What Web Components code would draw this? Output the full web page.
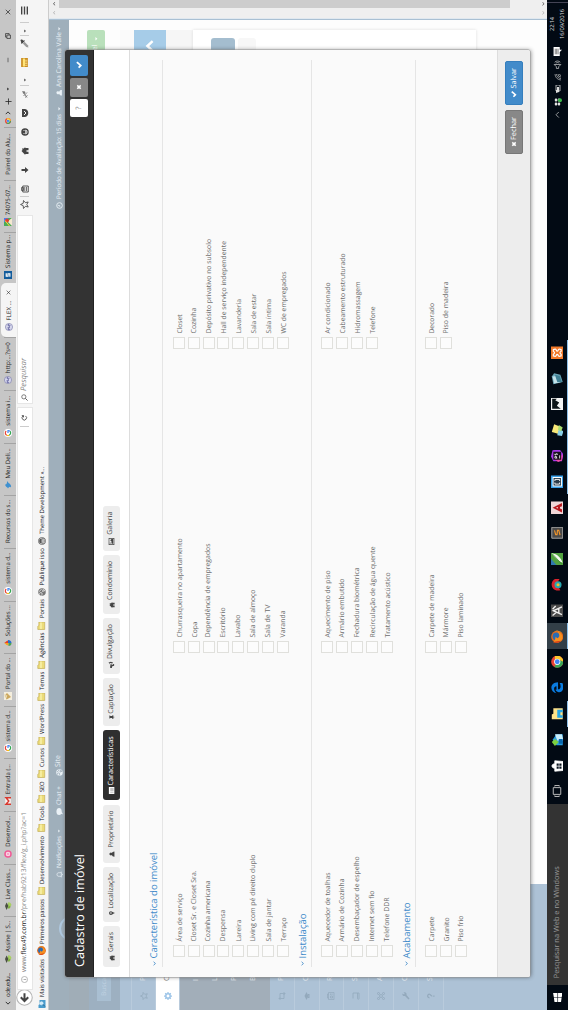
<!DOCTYPE html>
<html lang="pt-BR">
<head>
<meta charset="utf-8">
<title>Cadastro de imóvel</title>
<style>
html,body{margin:0;padding:0;width:568px;height:1010px;overflow:hidden;background:#fdfdfd}
body{font-family:"Open Sans","Noto Sans",sans-serif;text-rendering:geometricPrecision}
</style>
</head>
<body>
<turned-desktop></turned-desktop>
<script>
const ICONS = {
  check:'<path d="M1.5 8.5 4 6l3 3 5.500-6.500L15 5 7 14z" fill="currentColor"/>',
  times:'<path d="M2 5 5 2l3 3 3-3 3 3-3 3 3 3-3 3-3-3-3 3-3-3 3-3z" fill="currentColor"/>',
  chev:'<path d="M2.500 5 8 11l5.500-6" fill="none" stroke="currentColor" stroke-width="2.800"/>',
  up:'<path d="M2.500 11 8 5l5.500 6" fill="none" stroke="currentColor" stroke-width="2.800"/>',
  thinleft:'<path d="M11 2 5 8l6 6" fill="none" stroke="currentColor" stroke-width="2.400"/>',
  thinright:'<path d="m5 2 6 6-6 6" fill="none" stroke="currentColor" stroke-width="2.400"/>',
  thinup:'<path d="M1 12 8 5l7 7" fill="none" stroke="currentColor" stroke-width="1.800"/>',
  caret:'<path d="M2 5h12l-6 7z" fill="currentColor"/>',
  home:'<path d="M8 1 0 8.500h2V15h4.500v-4h3v4H14V8.500h2L13 5.500V2h-2v2z" fill="currentColor"/>',
  pin:'<path fill-rule="evenodd" d="M8 0a5 5 0 0 0-5 5c0 3 3 6 5 11 2-5 5-8 5-11a5 5 0 0 0-5-5zm0 3a2.200 2.200 0 1 1 0 4.400A2.200 2.200 0 0 1 8 3z" fill="currentColor"/>',
  user:'<path d="M8 1a3.700 4 0 0 1 2.500 7c2.500.5 4.500 2 4.500 6.500H1C1 10 3 8.500 5.500 8A3.700 4 0 0 1 8 1z" fill="currentColor"/>',
  list:'<path d="M0 2h16v12.500H0z" fill="currentColor"/><path d="M2 6.500h2m2 0h8M2 9h2m2 0h8m-12 2.500h2m2 0h8" stroke="#333" stroke-width=".8"/>',
  tack:'<path d="M4 1h8v2l-1.500.5v4L13 10v1.500H9L8 16l-1-4.500H3V10l2.500-2.500v-4L4 3z" fill="currentColor"/>',
  horn:'<path d="M0 5h5c4 0 6-2 8-4v3c2 .5 2 4.500 0 5v3c-2-2-3-3-6-3.500.5 2 .5 4 2 5.500H5L3.500 9H0z" fill="currentColor"/><path d="M6 6c2 0 4-.8 5.500-2v5C10 8 8 7.200 6 7z" fill="#eee"/>',
  image:'<path fill-rule="evenodd" d="M0 1.500h16v13H0zm1.500 1.500v10h13V3z" fill="currentColor"/><path d="M3 12V9l2-2 2 2 4-4 2.500 3v4z" fill="currentColor"/><circle cx="4.500" cy="5" r="1.300" fill="currentColor"/>',
  bell:'<path d="M2 12c2-2 2-4 2-6 0-5 8-5 8 0 0 2 0 4 2 6zM6 13c1 2.500 3 2.500 4 0" fill="none" stroke="currentColor" stroke-width="1.800"/>',
  chat:'<ellipse cx="8" cy="7" rx="8" ry="6" fill="currentColor"/><path d="m3 10-1 6 6-3.500z" fill="currentColor"/>',
  globe:'<circle cx="8" cy="8" r="7.500" fill="currentColor"/><path d="M3 3c4 0 5 2 3 5-3 1-4-1-5-1M9 2l2 3 3 2M9 9l4 1-2 4z" fill="none" stroke="var(--cut,#9caab6)" stroke-width="1.800"/>',
  clock:'<circle cx="8" cy="8" r="6.500" fill="none" stroke="currentColor" stroke-width="2"/><path d="M8 4v4.500H5" fill="none" stroke="currentColor" stroke-width="1.800"/>',
  star:'<path d="m8 1 2.100 4.700 5 .5-3.800 3.400 1.200 5L8 12.100 3.500 14.600l1.200-5L.9 6.200l5-.5z" fill="none" stroke="currentColor" stroke-width="1.500"/>',
  clip:'<path d="M2 3.500h12v11H2z" fill="none" stroke="currentColor" stroke-width="1.800"/><path d="M5 1h6v4H5zM4 7.500h8M4 11h8" stroke="currentColor" fill="none" stroke-width="1.500"/>',
  down:'<path d="M6 1h4v7h4l-6 7-6-7h4z" fill="currentColor"/>',
  smile:'<circle cx="8" cy="8" r="7.500" fill="currentColor"/><path d="M4 9.500c1 3.500 7 3.500 8 0zM5 5v2m6-2v2" stroke="#f5f5f5" fill="none" stroke-width="1.800"/>',
  pocket:'<path d="M0 2h16v5c0 10-16 10-16 0z" fill="currentColor"/><path d="m4 6 4 4 4-4" fill="none" stroke="#f5f5f5" stroke-width="2"/>',
  glasses:'<path d="M1 12 14 3M4 5l7 7M1 8l4 5" stroke="currentColor" stroke-width="1.800" fill="none"/><circle cx="11" cy="6" r="2.600" fill="currentColor"/>',
  ruler:'<path d="M0 2h16v12H0z" fill="#c88c22"/><path d="M1 5h14v4H1z" fill="#ffe478"/><path d="M3 9v4m3-4v4m3-4v4m3-4v4" stroke="#fbe08a" stroke-width="1.500"/>',
  drop:'<path d="m1 15 1-4 6-6 3 3-6 6z" fill="#999"/><path d="m7 3 6 6 1-2-1-1c4-3 1-7-2-4L9 2z" fill="#444"/>',
  menu:'<path d="M1 3h14M1 8h14M1 13h14" stroke="currentColor" stroke-width="2.400"/>',
  back:'<circle cx="8" cy="8" r="7.300" fill="#fff" stroke="#b5b5b5" stroke-width="1"/><path d="M12 8H5m3.300-3.500L4.700 8l3.600 3.500" fill="none" stroke="#444" stroke-width="1.900"/>',
  info:'<circle cx="8" cy="8" r="7" fill="none" stroke="currentColor" stroke-width="1.300"/><path d="M8 7v5M8 4v1.600" stroke="currentColor" stroke-width="1.600"/>',
  reload:'<path d="M12.500 11A5.500 5.500 0 1 1 12 4.500" fill="none" stroke="currentColor" stroke-width="2"/><path d="M14 1v6H8z" fill="currentColor"/>',
  search:'<circle cx="9.500" cy="6.500" r="4.800" fill="none" stroke="currentColor" stroke-width="1.700"/><path d="m6 10-5 5" stroke="currentColor" stroke-width="2.200"/>',
  folder:'<path d="M1 1.500h6l1.500 2H15v11H1z" fill="#ecdc7a" stroke="#c0a850" stroke-width="1.200"/><path d="M2 6h12v3H2z" fill="#f8f0a8"/>',
  most:'<path d="M0 1h6l1 2h9v12H0z" fill="#4a9ccc"/><circle cx="9.500" cy="7" r="3.200" fill="#cdeafa" stroke="#fff"/><path d="m7 10-4 4" stroke="#26648e" stroke-width="2"/>',
  firefox:'<circle cx="8" cy="8" r="7.800" fill="#e66a18"/><circle cx="8.500" cy="7" r="5" fill="#2a6cb4"/><path d="M1 3c1 1 2 1 3 2l4 1-2 2c1 3 5 4 8 0 0 8-12 9-13.500 1z" fill="#f69020"/><path d="M14 3c2 3 2 9-2 11 4-1 5-7 2-11z" fill="#ffcf38"/><path d="M1 2.500C0 6 0 10 3 13L2 6z" fill="#d83a18"/>',
  wp:'<circle cx="8" cy="8" r="7.500" fill="#555"/><circle cx="8" cy="8" r="6.200" fill="none" stroke="#eee" stroke-width=".8"/><path d="m3 5 3 8 2-6 2 6 3-8" fill="none" stroke="#eee" stroke-width="1.500"/>',
  leaf:'<path d="M0 5 8 2l7 3-7 4z" fill="#4a4f42"/><path d="M3 7v4c2 3 7 3 10-1V7L8 9z" fill="#80b040"/><path d="M8 11c3-4 6-3 8-2-1 5-5 7-8 5z" fill="#a8d060"/>',
  pink:'<circle cx="8" cy="8" r="7.500" fill="#f05a96"/><circle cx="8" cy="8" r="4.500" fill="#fde3ed"/><path d="M5 8h6M8 5v6" stroke="#e85a90"/>',
  gmail:'<path d="M0 2.500h16v11H0z" fill="#f8f0ee"/><path d="M1.500 14V4L8 9.500 14.500 4v10" fill="none" stroke="#d8382e" stroke-width="3"/>',
  google:'<circle cx="8" cy="8" r="8" fill="#fff"/><g fill="none" stroke-width="2.400"><path d="M12 4.500A5 5 0 0 0 3.500 5.800" stroke="#e84436"/><path d="M3.500 5.800a5 5 0 0 0 0 4.500" stroke="#f8bc16"/><path d="M3.500 10.300A5 5 0 0 0 11.500 12" stroke="#34a853"/><path d="M11.500 12A5 5 0 0 0 13 8H8" stroke="#4285f4"/></g>',
  portal:'<path d="M0 0h16v16H0z" fill="#f4eede"/><path d="M1 5c4-3 6 5 10-2l3 3-8 8z" fill="#cba75e"/><path d="M4 2l5 5 3-6z" fill="#e2cfa0"/>',
  flame:'<path d="M8 0c1 3 5 5 5 9H8z" fill="#e83c2c"/><path d="M8 0v9H3c0-4 3-5 5-9z" fill="#f8a020"/><path d="M2 9h6v6C4 15 2 13 2 9z" fill="#4aa456"/><path d="M8 8h6c0 5-3 7-6 7z" fill="#2870d0"/>',
  bird:'<path d="M1 8c3-1 3-5 8-6 0 3 1 3 4 4l3 1-4 2c-2 4-5 6-9 5 3-2 1-4-2-6z" fill="#3e90d0"/>',
  php:'<circle cx="8" cy="8" r="7.200" fill="#d5d6ec" stroke="#7878a8" stroke-width="1.200"/><path d="M3 10V6h2v2H3m4-3v5m0-2h2v2m2 1V6h2v2h-2" stroke="#5a5a9a" fill="none" stroke-width="1.200"/>',
  sq:'<path d="M0 0h16v16H0z" fill="#125c9c"/><path d="M11.500 4.500h-6v3.500h5v3.700h-6" fill="none" stroke="#fff" stroke-width="2.400"/>',
  map:'<path d="M0 0h16v16H0z" fill="#4aab58"/><path d="M0 16 9 7l7 9z" fill="#f4e8d0"/><path d="M7 0h9v9z" fill="#4a7ef0"/><circle cx="11" cy="6" r="4" fill="#e23c30"/><path d="m0 11 11-9" stroke="#ffd33c" stroke-width="2"/>',
  chrome:'<circle cx="8" cy="8" r="7.800" fill="#e94435"/><path d="M8 8 1.200 4.200A7.800 7.800 0 0 0 8 15.800l3-5.500z" fill="#3aa757"/><path d="M8 5h7.200A7.800 7.800 0 0 1 8 15.800l3-6z" fill="#fcc62d"/><circle cx="8" cy="8" r="4" fill="#fff"/><circle cx="8" cy="8" r="3.100" fill="#4285f4"/>',
  minus:'<path d="M2 8h12" stroke="currentColor" stroke-width="1.500"/>',
  restore:'<path d="M1.500 5h9v9.500h-9zM5 5V1.500h9.500V11h-4" fill="none" stroke="currentColor" stroke-width="1.800"/>',
  x:'<path d="m2 2 12 12M14 2 2 14" stroke="currentColor" stroke-width="1.800"/>',
  plus:'<path d="M8 1v14M1 8h14" stroke="currentColor" stroke-width="1.800"/>',
  gear:'<circle cx="8" cy="8" r="4.400" fill="none" stroke="currentColor" stroke-width="3"/><path d="M8 0v3m0 10v3M0 8h3m10 0h3M2.400 2.400l2 2m7.200 7.200 2 2m0-11.200-2 2m-7.200 7.200-2 2" stroke="currentColor" stroke-width="2.500"/>',
  retweet:'<path d="M3 2v10h9M0 5l3-3 3 3m-1-1h8v10m-3-3 3 3 3-3" fill="none" stroke="currentColor" stroke-width="1.600"/>',
  grad:'<path d="m0 7 8-4 8 4-8 4zM4 10v3h8v-3" fill="currentColor"/>',
  doc:'<path d="M1 3h14v11H1zM4 3V1h8v2M4 7h4v4H4zM10 7h3m-3 3h3" fill="none" stroke="currentColor" stroke-width="1.400"/>',
  book:'<path d="M3 2h11v12H3c-2 0-2-3 0-3h11" fill="none" stroke="currentColor" stroke-width="1.600"/>',
  nodes:'<g fill="none" stroke="currentColor" stroke-width="1.600"><circle cx="8" cy="8" r="3"/><circle cx="3" cy="3" r="2"/><circle cx="13" cy="3" r="2"/><circle cx="3" cy="13" r="2"/><circle cx="13" cy="13" r="2"/></g>',
  wrench:'<path d="m1 13 7-7c-1-4 2-6 5-5l-2 3 1.500 1.500L15 3c2 4-1 7-5 6l-7 6z" fill="currentColor"/>',
  ask:'<path d="M4.500 5c0-5 7.500-4.500 7 0-.3 2.300-3.500 2.500-3.500 5.500m0 2V15" fill="none" stroke="currentColor" stroke-width="2.500"/>',
  win:'<path d="m0 2.500 7-1v6H0zM8 1.400 16 0v7.500H8zM0 8.500h7v6l-7-1zM8 8.500h8V16l-8-1.300z" fill="#fff"/>',
  tview:'<path d="M3.500 3h9v10h-9zM2 5H.7v6H2m12-6h1.300v6H14" fill="none" stroke="#bbb" stroke-width="1.300"/>',
  store:'<path d="M1 5h14l-1 11H2zM5 5c0-5 6-5 6 0" fill="#fff" stroke="#fff"/><path d="M4.500 7.500h3v2.800h-3zm4 0h3v2.800h-3zm-4 3.600h3V14h-3zm4 0h3V14h-3z" fill="#08131f"/>',
  cube3:'<path d="M1 7 8 2l7 5v8H1z" fill="#2a9be0"/><path d="M0 5 5 1l4 4-4 5z" fill="#7cd040"/><path d="m7 8 8-3v9l-8 2z" fill="#c8edfa"/><path d="M3 10h6v5H3z" fill="#0868b0"/>',
  explorer:'<path d="M1 1h6l1 2h7v12H1z" fill="#ffe38a"/><path d="M3 8h10v7h-3v-3H6v3H3z" fill="#28a8e8"/>',
  edge:'<path d="M1 7c1-9 14-9 14 2H6c0 4 5 4 8 2v3.500C7 18 1 14 2.500 9 3 7 5 5.500 6 5.500 5 6 5.500 6.800 5.500 7H10c0-4-6-4-9 0z" fill="#0a7be0"/>',
  ai:'<path d="M0 0h16v16H0z" fill="#4b4b4b"/><path d="m3 14 5-11 5 11M5 10h7M2 2l4 5M10 2l4 4" fill="none" stroke="#eee" stroke-width="1.800"/>',
  redball:'<path d="M1 12C-1 4 5 0 10 1c5 1 7 6 5 10l-5-4z" fill="#d9232c"/><circle cx="8" cy="9" r="4.500" fill="#27a7b0"/><circle cx="8" cy="9" r="2" fill="#f0c030"/>',
  green:'<path d="M0 0h16v16H0z" fill="#52a340"/><path d="M3 15C5 9 9 5 15 1c-1 7-5 11-12 14z" fill="#f4faf0"/><path d="m0 7 8-7H0z" fill="#2f7ab0"/><path d="m1 14 13-12" stroke="#3c8a30"/>',
  subl:'<path d="M1 1h14v14H1z" fill="#4a4a4a" stroke="#aaa" stroke-width="1.200"/><path d="M11 4.500 5.500 6v1.700l5.500.6V10l-6 1.500" fill="none" stroke="#f0952c" stroke-width="1.500"/>',
  acad:'<path d="M0 0h16v16H0z" fill="#efd6d8"/><path fill-rule="evenodd" d="M8 2 2 14h4l1-2.500h2l1 2.500h4zM8 6l1 3H7z" fill="#b8181e"/>',
  brack:'<path d="M0 0h16v16H0z" fill="#3aa0e8"/><path d="M2 2h12v12H2z" fill="#fff"/><path d="M3.300 3.300h9.400v9.400H3.300z" fill="#2a3a48"/><path d="M7 5H5v6h2m2-6h2v6H9" fill="none" stroke="#fff" stroke-width="1.200"/>',
  phps:'<path d="m1 3 6-3 8 2 1 9-6 5-9-2z" fill="#a838e8"/><path d="m0 9 5-6 4 12-7-1z" fill="#f04aa8"/><path d="M3 3h10v10H3z" fill="#15101c"/><path d="M5 8V5h2v2H5m5.500-2H9v1.300h1.500V8H9M4.500 11h4" stroke="#fff" fill="none"/>',
  notes:'<path d="m5 1 10 3-3 8-9-3z" fill="#f8e878"/><path d="m1 8 8 2-3 6-6-2z" fill="#8ad0e8"/><path d="m8 9 6 1-3 5-5-2z" fill="#a8dc70"/>',
  mount:'<path d="M0 0h16v16H0z" fill="#f4f4f4"/><path d="M1.500 1.500h13v6l-2-2-3 5-4-3-4 5z" fill="#0c1418"/>',
  glass:'<path d="m1 3 10-2 4 3-2 8-9 3z" fill="#6aa6b8"/><path d="m2 4 9-2 1 8-8 3z" fill="#c4e2ea"/><path d="m4 8 9-3-1 6-8 3z" fill="#3f7f94"/>',
  xampp:'<path d="M0 0h16v16H0z" fill="#f27a2a"/><path d="M4 3c-2 5 2 3 2 5s-4 0-2 5h2c1-2 3-2 4 0h2c2-5-2-3-2-5s4 0 2-5h-2C9 5 7 5 6 3z" fill="none" stroke="#fff" stroke-width="1.500"/>',
  dbox:'<path d="m4 1 4 3-4 3-4-3zm8 0 4 3-4 3-4-3zM4 7l4 3-4 3-4-3zm8 0 4 3-4 3-4-3z" fill="#eee"/><circle cx="11.500" cy="12" r="4" fill="#3ab84a"/>',
  batt:'<path d="M4 4h12v8H4z" fill="none" stroke="#ddd" stroke-width="1.500"/><path d="M6 6h6v4H6zM0 4h6v6H2z" fill="#ddd"/>',
  wifi:'<path d="M2 14A12 12 0 0 1 14 2M5 14a9 9 0 0 1 9-9M8 14a6 6 0 0 1 6-6M11 14a3 3 0 0 1 3-3" fill="none" stroke="#bbb" stroke-width="1.400"/>',
  vol:'<path d="M1 6h3l4-4v12l-4-4H1z" fill="none" stroke="#ccc" stroke-width="1.300"/><path d="M10 5c2 2 2 4 0 6m2-8c3 3 3 7 0 10" fill="none" stroke="#ccc" stroke-width="1.300"/>',
  notif:'<path d="M0 1h16v11h-5v4l-4-4H0z" fill="#fff"/><path d="M3 4h10M3 6.500h10M3 9h10" stroke="#222" stroke-width="1"/>'
};

class XIcon extends HTMLElement {
  connectedCallback() {
    const s = this.getAttribute('s') || 7;
    const r = this.shadowRoot || this.attachShadow({mode:'open'});
    r.innerHTML = `<style>:host{display:block;flex:none;width:${s}px;height:${s}px}svg{display:block;width:100%;height:100%}</style>
      <svg viewBox="0 0 16 16">${ICONS[this.getAttribute('n')] || ''}</svg>`;
  }
}
/* Single-line label that sizes its letters to fill the width given in "w". */
class XLabel extends HTMLElement {
  connectedCallback() {
    const w = +this.getAttribute('w');
    const r = this.shadowRoot || this.attachShadow({mode:'open'});
    r.innerHTML = `<style>:host{display:block;flex:none;width:${w}px;white-space:nowrap}span{display:inline-block;white-space:pre;vertical-align:middle}</style><span><slot></slot></span>`;
    const span = r.querySelector('span'), n = this.textContent.length;
    const width = () => parseFloat(getComputedStyle(span).width);
    const nat = width(), fs = parseFloat(getComputedStyle(this).fontSize);
    if (!n || !nat) return;
    span.style.fontSize = (fs * Math.min(1.1, Math.max(.92, w / nat))).toFixed(3) + 'px';
    span.style.letterSpacing = ((w - width()) / n).toFixed(3) + 'px';
  }
}
/* Lays [start, width, html] entries along one row using margins between neighbours. */
const run = (items, from = 0) => {
  let end = from;
  return items.map(([u, w, html]) => {
    const m = u - end; end = u + w;
    return `<div class="c" style="margin-left:${m.toFixed(2)}px;width:${w}px">${html}</div>`;
  }).join('');
};
const ic = (u, n, s = 7, color = '') => [u - s / 2, s, `<x-icon n="${n}" s="${s}"${color ? ` style="color:${color}"` : ''}></x-icon>`];
const tx = (a, b, t) => [a, b - a, `<x-label w="${b - a}">${t}</x-label>`];
const ROW = '.c{flex:none}*{box-sizing:border-box}';
const define = (name, html) => customElements.define(name, class extends HTMLElement {
  connectedCallback() {
    if (this.shadowRoot) return;
    this.attachShadow({mode:'open'}).innerHTML = typeof html === 'function' ? html(this) : html;
  }
});
customElements.define('x-icon', XIcon);
customElements.define('x-label', XLabel);

define('browser-tab', el => {
  const i = el.getAttribute('icon'), on = el.hasAttribute('on');
  return `<style>:host{display:flex;flex:none;align-items:center;width:52.63px;height:15px;padding-left:${i ? 6 : 5}px;gap:3px;box-sizing:border-box;
    ${on ? 'background:#f5f5f5;border-radius:5px 5px 0 0;margin-top:1px;width:54.63px;margin-right:-2px' : 'background:linear-gradient(#a4a4a4,#a4a4a4) right 3px/1px 12px no-repeat'}}
    .x{margin-left:2px}</style>${i ? `<x-icon n="${i}" s="8"></x-icon>` : ''}<slot></slot>${on ? '<x-icon class="x" n="x" s="5"></x-icon>' : ''}`;
});
const TABS = [['leaf','Assine | S...',31],['leaf','Live Class...',31],['pink','Desenvol...',31],['gmail','Entrada (...',30],['google','sistema d...',31],['portal','Portal do ...',31],['flame','Soluções ...',31],['google','sistema d...',31],['','Recursos do s...',43],['bird','Meu Deli...',30],['google','sistema i...',30],['php','http:...?s=0',31],['php','FLEX ...',20,1],['sq','Sistema p...',33],['map','74075-07...',30],['','Painel do Alu...',41]];
define('tab-strip', `<style>${ROW}:host{display:flex;height:16px;align-items:center;background:#c6c6c6;font-size:6.6px;line-height:12px;color:#222}
  .w{display:flex;align-items:center}</style>
  <div class="w">${run([ic(7,'thinleft',6), tx(13,37,'ode.edu...')])}</div><div style="width:4px"></div>
  ${TABS.map(t => `<browser-tab icon="${t[0]}" ${t[3] ? 'on' : ''}><x-label w="${t[2]}">${t[1]}</x-label></browser-tab>`).join('')}
  <div class="w">${run([ic(889.5,'chrome',6), ic(897,'thinright',6), ic(909,'plus',7), ic(921,'caret',4), ic(950,'minus',6), ic(974,'restore',6), ic(998,'x',6)],883.08)}</div>`);

define('nav-bar', `<style>${ROW}:host{display:flex;align-items:center;height:17px;background:#f5f5f5;color:#444;font-size:7px;line-height:12px}
  .f{display:flex;align-items:center;background:#fff;height:14px;outline:1px solid #e6e6e6;outline-offset:-.5px}
  .s{width:1px;height:9px;background:#ccc} b{font-weight:400;color:#222}</style>
  ${run([ic(12,'back',17)])}
  <div class="f" style="width:581px">${run([ic(30,'info',7,'#888'), [38,160,'<x-label w="160" style="color:#888">www.<b>flex49.com.br</b>/pre/hab9213/flex/g_i.php?ac=1</x-label>'], [583,1,'<div class="s"></div>'], ic(592,'reload',6.5)],20.5)}</div>
  <div class="f" style="width:187px;margin-left:5px;font-style:italic;color:#888">${run([ic(612.500,'search',7,'#555'), tx(619,652,'Pesquisar')],606.5)}</div>
  ${run([ic(805,'star',9),[812.5,1,'<div class="s"></div>'],ic(821,'clip',8),ic(840,'down',8),ic(859,'home',8),ic(878,'smile',8),ic(897,'pocket',8),ic(916,'glasses',8,'#777'),[923.5,1,'<div class="s"></div>'],ic(930,'caret',4),ic(947,'ruler',9),ic(966,'drop',9),[973.5,1,'<div class="s"></div>'],ic(979,'caret',4),[987,1,'<div class="s"></div>'],ic(999,'menu',9)],793.5)}`);

define('bookmark-bar', () => {
  const f = u => ic(u,'folder',8.5);
  return `<style>${ROW}:host{display:flex;align-items:center;height:16px;padding-top:2px;box-sizing:border-box;background:#f5f5f5;border-bottom:1px solid #ccc;font-size:6.4px;line-height:12px;color:#111122;--cut:#ddd}</style>
  ${run([ic(6,'most',8),tx(13,51,'Mais visitados'),ic(59,'firefox',9),tx(66,111,'Primeiros passos'),f(119),tx(126,174,'Desenvolvimento'),f(182),tx(189,204,'Tools'),f(211),tx(218,228.5,'SEO'),f(236),tx(243,262,'Cursos'),f(269),tx(276,306,'WordPress'),f(313),tx(320,338.5,'Temas'),f(345),tx(352,377.5,'Agências'),f(384),tx(392,411,'Portais'),ic(418,'globe',8,'#777'),tx(424.5,462,'Publique isso'),ic(469,'wp',8),tx(476,543,'Theme Development »...')])}`;
});

define('app-header', `<style>${ROW}:host{display:flex;height:20px;align-items:center;background:#9fafbb;color:#eaf1f6;font-size:6.6px;line-height:12px;width:990px}</style>
  ${run([ic(135,'bell',7),tx(142,174,'Notificações'),ic(179,'caret',4),ic(198,'chat',7),tx(205,224,'Chat +'),ic(237,'globe',7),tx(243,255,'Site'),ic(804,'clock',7),tx(811,896,'Período de Avaliação: 15 dias'),ic(901,'caret',4.5),ic(917,'user',6.5),tx(923,978,'Ana Carolina Valle'),ic(981,'caret',4.5)])}`);

define('side-item', el => `<style>:host{display:flex;flex:none;align-items:center;box-sizing:border-box;height:24.8px;padding-left:10px;gap:11px;background:#adc2d6;border-bottom:1px solid #b9cbdc;color:#93a9bc;font-size:7px;line-height:10px}
  :host([on]){background:#fff;color:#9cc4e8;height:24px}:host([sub]){background:#a2aeb9;border:0;height:19px;padding-left:29px}</style>
  ${el.hasAttribute('sub') ? '' : `<x-icon n="${el.getAttribute('icon')}" s="8"></x-icon>`}<span style="color:${el.hasAttribute('on') ? '#777' : '#eef3f7'}"><slot></slot></span>`);
define('side-menu', `<style>:host{display:flex;flex-direction:column;width:126px;height:478px;background:#adc2d6}
  .q{height:31px;flex:none;background:#9db0c1;padding:8px 0 0 9px;box-sizing:border-box}
  .b{width:41px;height:14px;background:#a9bfd2;color:#c0d2e1;font-size:6.6px;line-height:14px;padding-left:5px;box-sizing:border-box}
  .t{height:20px;flex:none;background:#a0adb7}.g{height:12px;flex:none;border-bottom:1px solid #b9cbdc;box-sizing:border-box}
  .s{background:#a2aeb9;height:90px;flex:none;padding-top:7px;box-sizing:border-box}</style>
  <div class="t"></div><div class="q"><div class="b">Buscar</div></div><div class="g"></div>
  <side-item icon="star" style="height:24px">P</side-item><side-item icon="gear" on>C</side-item>
  <div class="s"><side-item sub>I</side-item><side-item sub>L</side-item><side-item sub>P</side-item><side-item sub>B</side-item></div>
  <side-item icon="retweet">P</side-item><side-item icon="grad">C</side-item><side-item icon="doc">R</side-item><side-item icon="book">S</side-item><side-item icon="nodes">A</side-item><side-item icon="wrench">C</side-item><side-item icon="ask">S</side-item>`);

define('page-content', `<style>:host{display:flex;flex-direction:column;align-items:flex-end;width:864px;height:478px;background:#fdfdfd;box-sizing:border-box;padding:18px 10px 0 0}
  .g{width:60px;height:18px;flex:none;background:#b9e0bb;border-radius:2px;color:#fff;font-size:7px;line-height:18px;box-sizing:border-box;display:flex;align-items:center;justify-content:flex-end;padding-right:7px;gap:3px}
  .p{margin-top:15px;height:14px;width:700px;background:#fafafa;flex:none}.b{height:32px;width:55px;background:#a6cce8;color:#fff;flex:none;display:flex;align-items:center;justify-content:flex-end;padding-right:9px;box-sizing:border-box}
  .h{height:27px;width:700px;background:#f6f6f6;flex:none}
  .card{height:283px;width:800px;background:#fff;box-shadow:0 0 3px #ddd;flex:none;display:flex;flex-direction:column;align-items:flex-end;padding:18px 8px 0 0;box-sizing:border-box;gap:3px}
  .k{height:24px;width:60px;background:#a4bdcf;border-radius:3px}.l{height:18px;width:60px;background:#f7f7f7;border-radius:3px}</style>
  <div class="g"><span>Imóvel</span><x-icon n="caret" s="4.500"></x-icon></div><div class="p"></div>
  <div class="b"><x-icon n="up" s="14"></x-icon></div><div class="h"></div>
  <div class="card"><div class="k"></div><div class="l"></div></div>`);

define('scroll-rail', `<style>:host{display:flex;flex-direction:column;align-items:center;justify-content:space-between;box-sizing:border-box;padding:3px 0 2px;width:10px;height:498px;background:#efefef;color:#aaa}
  :host([thumb]){width:8px;color:#444}.t{width:8px;height:451px;background:#cdcdcd;margin-bottom:28px;display:none}:host([thumb]) .t{display:block}</style>
  <x-icon n="up" s="4.500"></x-icon><div class="t"></div><x-icon n="chev" s="4.500"></x-icon>`);

define('round-ring', `<style>:host{position:absolute;left:69px;top:59px;width:25px;height:25px;box-sizing:border-box;border:2px solid #afc8df;border-radius:50%}</style>`);

define('tab-pill', el => `<style>:host{display:flex;flex:none;box-sizing:border-box;align-items:center;justify-content:space-between;width:${el.getAttribute('w')}px;height:17px;padding:0 6px;border-radius:3px;background:#ededed;color:#444;font-size:6.9px;line-height:16px}
  :host([on]){background:#2f2f2f;color:#fff}</style><x-icon n="${el.getAttribute('icon')}" s="${el.getAttribute('s') || 7}"></x-icon><slot></slot>`);

define('check-item', `<style>:host{display:flex;align-items:center;height:14.85px;gap:3.500px;font-size:6.8px;line-height:12px;color:#6c6c6c}
  i{flex:none;width:12px;height:12px;box-sizing:border-box;border:1px solid #e0e0dc;background:#fcfcfc}slot{display:block}.t{padding-top:1.500px}</style><i></i><div class="t"><slot></slot></div>`);

define('feature-section', el => `<style>:host{display:block}
  header{display:flex;align-items:center;box-sizing:border-box;height:17px;border-bottom:1px solid #e5e5e5;color:#428bca;font-size:9.400px;line-height:12px;gap:3px;margin-bottom:8.400px;padding:0 0 0 .5px}
  .g{display:grid;grid-template-columns:304px 304px 1fr;padding-left:10px}</style>
  <header><x-icon n="chev" s="5"></x-icon><x-label w="${el.getAttribute('w')}">${el.getAttribute('heading')}</x-label></header><div class="g"><slot></slot></div>`);

const col = list => `<div>${list.map(([t, w]) => `<check-item><x-label w="${w}">${t}</x-label></check-item>`).join('')}</div>`;
const S1 = [[['Área de serviço',48],['Closet Sr. e Closet Sra.',71],['Cozinha americana',61],['Despensa',32],['Lareira',22],['Living com pé direito duplo',87],['Sala de jantar',43],['Terraço',24]],
 [['Churrasqueira no apartamento',99],['Copa',16],['Dependência de empregados',94],['Escritório',30],['Lavabo',23],['Sala de almoço',48],['Sala de TV',33],['Varanda',27]],
 [['Closet',19],['Cozinha',26],['Depósito privativo no subsolo',94.5],['Hall de serviço independente',92.5],['Lavanderia',34.5],['Sala de estar',40],['Sala íntima',34.5],['WC de empregados',62]]];
const S2 = [[['Aquecedor de toalhas',69],['Armário de Cozinha',63],['Desembaçador de espelho',85],['Internet sem fio',51],['Telefone DDR',44]],
 [['Aquecimento de piso',67],['Armário embutido',59],['Fechadura biométrica',70],['Recirculação de água quente',91],['Tratamento acústico',65]],
 [['Ar condicionado',51],['Cabeamento estruturado',80],['Hidromassagem',52],['Telefone',27]]];
const S3 = [[['Carpete',25],['Granito',24],['Piso frio',26]],[['Carpete de madeira',63],['Mármore',30],['Piso laminado',45]],[['Decorado',30.5],['Piso de madeira',52]]];

define('property-dialog', `<style>*{box-sizing:border-box}
  :host{position:absolute;left:33px;top:65px;width:927px;height:465px;display:flex;flex-direction:column;background:#fafafa;border-radius:2px;box-shadow:0 0 0 .5px #999,0 1px 4px rgba(0,0,0,.45);overflow:hidden}
  .h{display:flex;align-items:center;height:28.500px;flex:none;background:#333;color:#fff;font-size:13.300px;line-height:20px;padding:0 5px 0 10px;gap:2px;border-bottom:.5px solid #222}
  .sp{flex:1}.k{height:18px;border-radius:2px;display:flex;align-items:center;justify-content:center;font-size:7.500px;line-height:12px}
  .n{display:flex;gap:4.200px;height:36px;flex:none;background:#fff;border-bottom:1px solid #ddd;padding:9.500px 0 0 10px}
  .m{flex:1;padding:16.500px 10px 0;display:flex;flex-direction:column}
  .f{height:33px;flex:none;background:#ededed;border-top:1px solid #ddd;display:flex;align-items:center;justify-content:flex-end;gap:5px;padding-right:11px}
  .b{width:44px;height:18px;border-radius:2px;display:flex;align-items:center;justify-content:space-between;padding:0 6px 0 6px;color:#fff;font-size:7px;line-height:16px;background:#888;border:.5px solid #777}
  .p{background:#428bca;border-color:#357ebd}</style>
  <div class="h"><x-label w="113" style="padding-top:1px">Cadastro de imóvel</x-label><div class="sp"></div>
    <div class="k" style="width:18px;background:#fff;color:#888">?</div><div class="k" style="width:19px;background:#888"><x-icon n="times" s="6"></x-icon></div><div class="k" style="width:21px;background:#428bca"><x-icon n="check" s="8"></x-icon></div></div>
  <div class="n">
    <tab-pill w="41" icon="home" s="6"><x-label w="20">Gerais</x-label></tab-pill>
    <tab-pill w="55" icon="pin" s="6"><x-label w="36">Localização</x-label></tab-pill>
    <tab-pill w="58" icon="user" s="6"><x-label w="37">Proprietário</x-label></tab-pill>
    <tab-pill w="70" icon="list" on><x-label w="49">Características</x-label></tab-pill>
    <tab-pill w="48" icon="tack" s="6"><x-label w="29.5">Captação</x-label></tab-pill>
    <tab-pill w="56" icon="horn"><x-label w="35">Divulgação</x-label></tab-pill>
    <tab-pill w="59" icon="home" s="6"><x-label w="39">Condomínio</x-label></tab-pill>
    <tab-pill w="45" icon="image"><x-label w="23">Galeria</x-label></tab-pill>
  </div>
  <div class="m">
    <feature-section heading="Característica do imóvel" w="106" style="height:148.600px">${S1.map(col).join('')}</feature-section>
    <feature-section heading="Instalação" w="45" style="height:104px">${S2.map(col).join('')}</feature-section>
    <feature-section heading="Acabamento" w="56">${S3.map(col).join('')}</feature-section>
  </div>
  <div class="f"><div class="b"><x-icon n="times" s="6"></x-icon><x-label w="23">Fechar</x-label></div><div class="b p"><x-icon n="check" s="7.500"></x-icon><x-label w="20.5">Salvar</x-label></div></div>`);

const APPS = ['cube3','explorer*','edge','chrome','firefox*','ai','redball','green','subl','acad','brack*','phps*','notes*','mount*','glass*','xampp*'];
define('task-bar', `<style>${ROW}:host{display:flex;align-items:center;height:21px;background:#020a14;color:#ddd;font-size:7px;line-height:10px}
  .s{width:181px;height:21px;background:#333;color:#999;padding-left:7px;display:flex;align-items:center;margin-left:7.500px;margin-right:7px}
  .a{width:25.8px;height:21px;flex:none;display:flex;align-items:center;justify-content:center;border-bottom:1px solid transparent}
  .r{border-color:#8fc0e8}.o{background:#333f48}.k{text-align:center;font-size:6.200px;line-height:9.500px;display:flex;flex-direction:column;align-items:center}
  .e{width:1px;height:21px;background:#445}</style>
  ${run([ic(12.500,'win',9.500)])}<div class="s"><x-label w="112">Pesquisar na Web e no Windows</x-label></div>
  <div class="a" style="width:12px"><x-icon n="tview" s="12"></x-icon></div><div class="a" style="margin-left:6px;margin-right:1px"><x-icon n="store" s="12"></x-icon></div>
  ${APPS.map(a => { const n = a.replace('*',''); return `<div class="a${a !== n ? ' r' : ''}${n === 'firefox' ? ' o' : ''}"><x-icon n="${n}" s="12.5"></x-icon></div>`; }).join('')}
  ${run([ic(896,'thinup',6.5,'#ccc'),ic(909,'dbox',8),ic(922,'batt',8),ic(934.500,'wifi',8),ic(947,'vol',9),ic(960,'notif',9),[972,30,'<div class="k"><x-label w="14">22:14</x-label><x-label w="30">16/09/2016</x-label></div>'],[1008,1,'<div class="e"></div>']],671.3)}`);

/* The whole desktop is 1010 by 568, turned a quarter to the left. */
define('turned-desktop', `<style>:host{display:block;position:relative;width:568px;height:1010px;overflow:hidden;contain:strict}
  .d{position:absolute;left:0;top:0;width:1010px;height:568px;transform-origin:0 0;transform:translateY(1010px) rotate(-90deg);overflow:hidden}
  .p{display:flex;height:498px}.v{width:990px;flex:none}.c{display:flex}.l{width:2px;background:#a9c0d3;border-right:1px solid #e0e8ef;box-sizing:border-box}</style>
  <div class="d"><tab-strip></tab-strip><nav-bar></nav-bar><bookmark-bar></bookmark-bar>
  <div class="p"><div class="v"><app-header></app-header><div class="c"><side-menu></side-menu><page-content></page-content></div></div><div class="l"></div><scroll-rail></scroll-rail><scroll-rail thumb></scroll-rail></div>
  <round-ring></round-ring><task-bar></task-bar><property-dialog></property-dialog></div>`);
</script>
</body>
</html>
